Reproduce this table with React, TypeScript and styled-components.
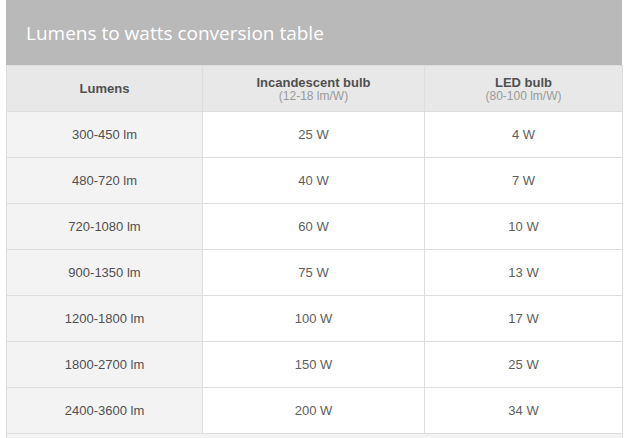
import React from "react";
import styled, { createGlobalStyle } from "styled-components";

const Global = createGlobalStyle`
  html, body { margin: 0; padding: 0; background: #fff; }
  body { font-family: "Liberation Sans", Arial, sans-serif; }
`;

const Page = styled.div`
  padding: 0 0 0 6px;
`;

const Panel = styled.div`
  width: 616px;
`;

const TitleBar = styled.div`
  height: 65px;
  background: #b9b9b9;
  display: flex;
  align-items: center;
  padding: 0 0 0 20px;
  box-sizing: border-box;
`;

const Title = styled.h2`
  margin: 0;
  font-family: "Open Sans", sans-serif;
  font-weight: 400;
  font-size: 19px;
  color: #fff;
`;

const Table = styled.div`
  display: grid;
  grid-template-columns: 196px 222px 198px;
  border-left: 1px solid #dddddd;
  box-sizing: border-box;
`;

const Cell = styled.div<{ $kind: "head" | "label" | "value" | "foot" }>`
  height: ${(p) => (p.$kind === "foot" ? "6px" : p.$kind === "head" ? "47px" : "46px")};
  box-sizing: border-box;
  border-right: ${(p) => (p.$kind === "foot" ? "0" : "1px solid #dddddd")};
  border-bottom: 1px solid #dddddd;
  border-top: ${(p) => (p.$kind === "head" ? "1px solid #dddddd" : "0")};
  background: ${(p) =>
    p.$kind === "head" ? "#e8e8e8" : p.$kind === "value" ? "#ffffff" : "#f3f3f3"};
  display: flex;
  flex-direction: column;
  align-items: center;
  justify-content: center;
  text-align: center;
  font-family: "Liberation Sans", Arial, sans-serif;
  font-size: 13px;
  font-weight: ${(p) => (p.$kind === "head" ? 700 : 400)};
  color: ${(p) => (p.$kind === "value" ? "#5e5e5e" : "#505050")};
  line-height: 15px;
`;

const FootCell = styled(Cell)`
  grid-column: 1 / 4;
  border-right: 1px solid #dddddd;
`;

const Sub = styled.span`
  font-size: 12px;
  font-weight: 400;
  color: #9a9a9a;
  line-height: 12px;
`;

const rows = [
  ["300-450 lm", "25 W", "4 W"],
  ["480-720 lm", "40 W", "7 W"],
  ["720-1080 lm", "60 W", "10 W"],
  ["900-1350 lm", "75 W", "13 W"],
  ["1200-1800 lm", "100 W", "17 W"],
  ["1800-2700 lm", "150 W", "25 W"],
  ["2400-3600 lm", "200 W", "34 W"],
];

export default function App() {
  return (
    <Page>
      <Global />
      <Panel>
        <TitleBar>
          <Title>Lumens to watts conversion table</Title>
        </TitleBar>
        <Table>
          <Cell $kind="head">Lumens</Cell>
          <Cell $kind="head">
            Incandescent bulb
            <Sub>(12-18 lm/W)</Sub>
          </Cell>
          <Cell $kind="head">
            LED bulb
            <Sub>(80-100 lm/W)</Sub>
          </Cell>
          {rows.map((r) => (
            <React.Fragment key={r[0]}>
              <Cell $kind="label">{r[0]}</Cell>
              <Cell $kind="value">{r[1]}</Cell>
              <Cell $kind="value">{r[2]}</Cell>
            </React.Fragment>
          ))}
          <FootCell $kind="foot" />
        </Table>
      </Panel>
    </Page>
  );
}
